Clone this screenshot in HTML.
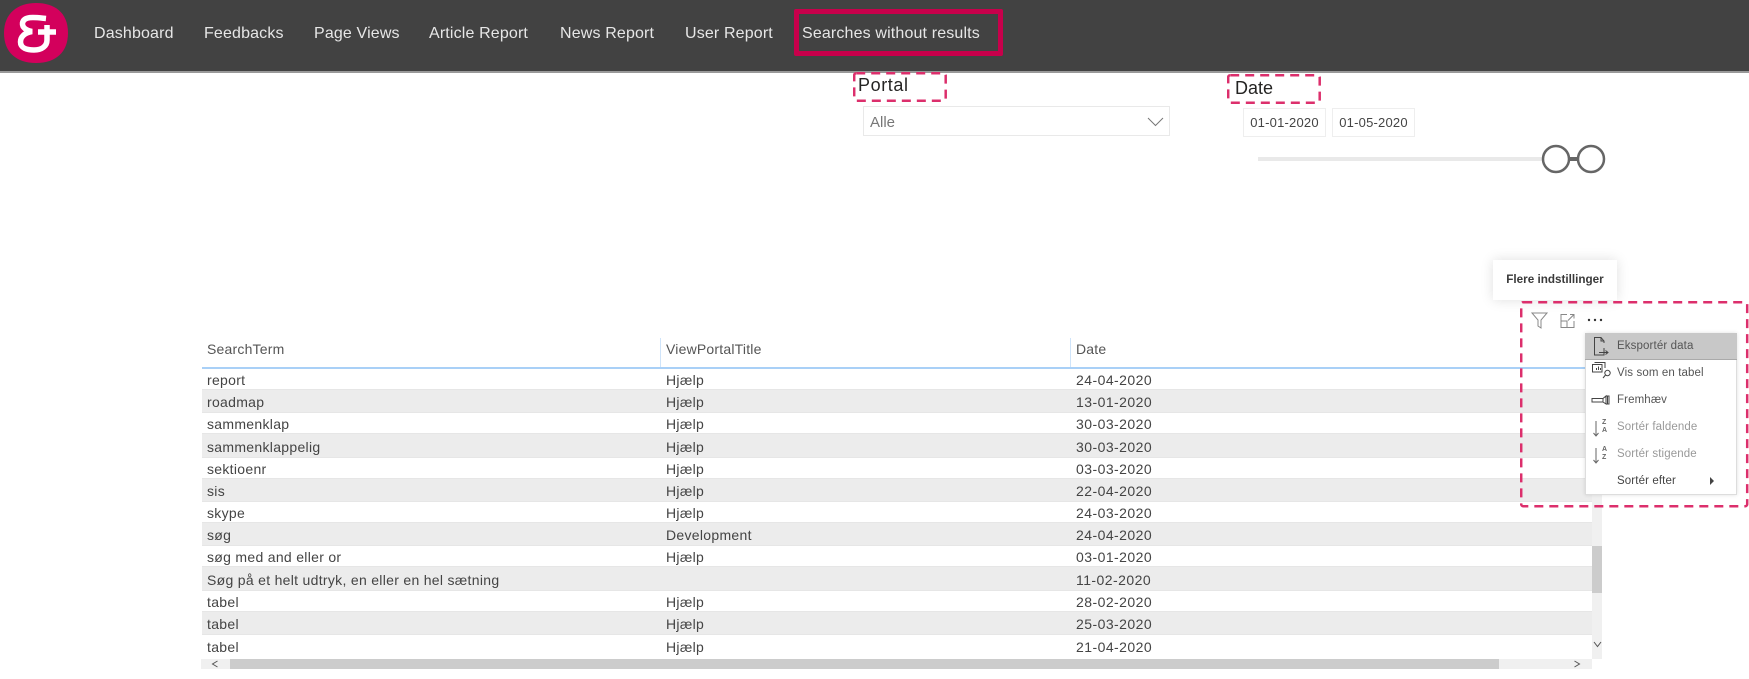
<!DOCTYPE html>
<html lang="da"><head><meta charset="utf-8"><title>Searches without results</title>
<style>
html,body{margin:0;padding:0;background:#fff;width:1749px;height:679px;overflow:hidden}
body{position:relative;font-family:"Liberation Sans",sans-serif;color:#444}
.a{position:absolute}
.hd{position:absolute;left:0;top:0;width:1749px;height:71px;background:#424242;border-bottom:2px solid #999}
.n{position:absolute;top:24px;font-size:16px;line-height:20px;color:#e6e6e6;white-space:nowrap;letter-spacing:.15px}
.row{position:absolute;left:202px;width:1390px;font-size:14px;color:#444;box-sizing:border-box;border-bottom:1px solid #e6e6e6}
.row.g{background:#ececec}
.row span{position:absolute;white-space:nowrap;top:50%;line-height:18px;margin-top:-8px;letter-spacing:.3px}
.c1{left:5px}.c2{left:464px}.row span.c3{left:874px;letter-spacing:.45px}
.th{position:absolute;top:340px;font-size:14px;line-height:18px;color:#555;white-space:nowrap;letter-spacing:.2px}
.mi{position:absolute;left:1617px;font-size:11.5px;line-height:14px;white-space:nowrap;letter-spacing:.12px;color:#555}
.dis{color:#999}
.date{position:absolute;top:108px;width:83px;height:29px;box-sizing:border-box;border:1px solid #eee;font-size:13px;line-height:27px;text-align:center;color:#444;letter-spacing:.2px}
</style></head><body>
<div class="hd"></div>
<svg class="a" style="left:0;top:0" width="80" height="72" viewBox="0 0 80 72">
<path d="M36 3C54 3 68 12 68 33C68 52 56 63 36 63C16 63 4 52 4 33C4 13 18 3 36 3Z" fill="#d3005c"/>
<path d="M46 18.500C36 17.500 24 15.500 22.500 23C22 28 27 30.500 32 31.500C24 33 20.500 37 20.500 42C20.500 48 27 50 34 50C42 50 47 46 47 40L47 25M38 32L56 32" fill="none" stroke="#fff" stroke-width="5.500"/>
</svg>
<div class="n" style="left:94px">Dashboard</div>
<div class="n" style="left:204px">Feedbacks</div>
<div class="n" style="left:314px">Page Views</div>
<div class="n" style="left:429px">Article Report</div>
<div class="n" style="left:560px">News Report</div>
<div class="n" style="left:685px">User Report</div>
<div class="n" style="left:802px">Searches without results</div>
<div class="a" style="left:794px;top:9px;width:209px;height:47px;box-sizing:border-box;border:5px solid #c8004b;border-radius:2px"></div>

<div class="a" style="left:858px;top:74px;font-size:18px;line-height:22px;color:#252423;letter-spacing:.6px">Portal</div>
<svg class="a" style="left:853px;top:72px" width="94" height="30"><rect x="1.200" y="1.200" width="91.500" height="27.500" rx="2" fill="none" stroke="#dc2f6c" stroke-width="2.500" stroke-dasharray="9 6"/></svg>
<div class="a" style="left:863px;top:106px;width:307px;height:30px;box-sizing:border-box;border:1px solid #e9e9e9"></div>
<div class="a" style="left:870px;top:114px;font-size:15px;line-height:18px;color:#777">Alle</div>
<svg class="a" style="left:1147px;top:116px" width="17" height="12"><path d="M1 2L8.500 9.500L16 2" fill="none" stroke="#777" stroke-width="1"/></svg>

<div class="a" style="left:1235px;top:77px;font-size:18px;line-height:22px;color:#252423">Date</div>
<svg class="a" style="left:1227px;top:74px" width="94" height="30"><rect x="1.200" y="1.200" width="91.500" height="27.500" rx="2" fill="none" stroke="#dc2f6c" stroke-width="2.500" stroke-dasharray="9 6"/></svg>
<div class="date" style="left:1243px">01-01-2020</div>
<div class="date" style="left:1332px">01-05-2020</div>
<div class="a" style="left:1258px;top:157px;width:290px;height:4px;background:#e9e9e9"></div>
<svg class="a" style="left:1540px;top:143px" width="68" height="32">
<path d="M28 16H38" stroke="#666" stroke-width="4"/>
<circle cx="16" cy="16" r="13" fill="#fff" stroke="#666" stroke-width="2.500"/>
<circle cx="51" cy="16" r="13" fill="#fff" stroke="#666" stroke-width="2.500"/>
</svg>

<div class="th" style="left:207px">SearchTerm</div>
<div class="th" style="left:666px">ViewPortalTitle</div>
<div class="th" style="left:1076px">Date</div>
<div class="a" style="left:660px;top:338px;width:1px;height:30px;background:#cfe4fa"></div>
<div class="a" style="left:1070px;top:338px;width:1px;height:30px;background:#cfe4fa"></div>
<div class="a" style="left:202px;top:367px;width:1390px;height:2px;background:#a9d0f7"></div>

<div class="row" style="top:369px;height:21px"><span class="c1">report</span><span class="c2">Hjælp</span><span class="c3">24-04-2020</span></div>
<div class="row g" style="top:390px;height:23px"><span class="c1">roadmap</span><span class="c2">Hjælp</span><span class="c3">13-01-2020</span></div>
<div class="row" style="top:413px;height:21px"><span class="c1">sammenklap</span><span class="c2">Hjælp</span><span class="c3">30-03-2020</span></div>
<div class="row g" style="top:434px;height:24px"><span class="c1">sammenklappelig</span><span class="c2">Hjælp</span><span class="c3">30-03-2020</span></div>
<div class="row" style="top:458px;height:21px"><span class="c1">sektioenr</span><span class="c2">Hjælp</span><span class="c3">03-03-2020</span></div>
<div class="row g" style="top:479px;height:23px"><span class="c1">sis</span><span class="c2">Hjælp</span><span class="c3">22-04-2020</span></div>
<div class="row" style="top:502px;height:21px"><span class="c1">skype</span><span class="c2">Hjælp</span><span class="c3">24-03-2020</span></div>
<div class="row g" style="top:523px;height:23px"><span class="c1">søg</span><span class="c2">Development</span><span class="c3">24-04-2020</span></div>
<div class="row" style="top:546px;height:21px"><span class="c1">søg med and eller or</span><span class="c2">Hjælp</span><span class="c3">03-01-2020</span></div>
<div class="row g" style="top:567px;height:24px"><span class="c1">Søg på et helt udtryk, en eller en hel sætning</span><span class="c3">11-02-2020</span></div>
<div class="row" style="top:591px;height:21px"><span class="c1">tabel</span><span class="c2">Hjælp</span><span class="c3">28-02-2020</span></div>
<div class="row g" style="top:612px;height:23px"><span class="c1">tabel</span><span class="c2">Hjælp</span><span class="c3">25-03-2020</span></div>
<div class="row" style="top:635px;height:21px;border:0"><span class="c1">tabel</span><span class="c2">Hjælp</span><span class="c3">21-04-2020</span></div>

<div class="a" style="left:1592px;top:369px;width:10px;height:290px;background:#f0f0f0"></div>
<div class="a" style="left:1592px;top:546px;width:10px;height:47px;background:#ccc"></div>
<svg class="a" style="left:1593px;top:641px" width="9" height="7"><path d="M1 1L4.500 5.500L8 1" fill="none" stroke="#555" stroke-width="1"/></svg>
<div class="a" style="left:201px;top:659px;width:1391px;height:10px;background:#f0f0f0"></div>
<div class="a" style="left:230px;top:659px;width:1269px;height:10px;background:#ccc"></div>
<svg class="a" style="left:211px;top:660px" width="8" height="8"><path d="M6.500 1L1.500 4L6.500 7" fill="none" stroke="#555" stroke-width="1"/></svg>
<svg class="a" style="left:1573px;top:660px" width="8" height="8"><path d="M1.500 1L6.500 4L1.500 7" fill="none" stroke="#555" stroke-width="1"/></svg>

<div class="a" style="left:1493px;top:260px;width:124px;height:40px;background:#fff;box-shadow:0 0 12px rgba(0,0,0,.13);font-weight:bold;font-size:11.7px;line-height:40px;text-align:center;color:#3a3a3a;white-space:nowrap">Flere indstillinger</div>

<svg class="a" style="left:1520px;top:301px" width="229" height="207"><rect x="1.200" y="1.200" width="226" height="204" rx="2" fill="none" stroke="#dc2f6c" stroke-width="2.500" stroke-dasharray="9 6"/></svg>

<svg class="a" style="left:1530px;top:310px" width="75" height="20" fill="none">
<path d="M2 3H17L11 10V18L8 16V10Z" stroke="#888" stroke-width="1"/>
<path d="M37 4.500H31V17.500H44V11M31 11H37V17.500M38 10.500L44 4.500M40 4.500H44V8.500" stroke="#888" stroke-width="1"/>
<circle cx="59" cy="10" r="1.200" fill="#333"/><circle cx="65" cy="10" r="1.200" fill="#333"/><circle cx="71" cy="10" r="1.200" fill="#333"/>
</svg>

<div class="a" style="left:1585px;top:333px;width:152px;height:162px;box-sizing:border-box;background:#fff;border:1px solid #ddd;box-shadow:0 0 4px rgba(0,0,0,.12)"></div>
<div class="a" style="left:1585px;top:333px;width:152px;height:27px;background:#c8c8c8;border-bottom:1px solid #aaa;box-sizing:border-box"></div>
<svg class="a" style="left:1590px;top:335px" width="26" height="160" fill="none" stroke="#444" stroke-width="1">
<path d="M14 13V20H4.500V2.500H11L14 6V8M11 2.500V6H14M9 17.500H18M15.500 15.500L18 17.500L15.500 19.500"/>
<path d="M2.500 29.500H12V37H2.500ZM4.500 27.500H15V33M6.500 35V33M8.500 35V31.500M10.500 35V33M13 43L15.500 40"/><circle cx="17.500" cy="38" r="2.700" fill="#fff"/>
<path d="M2 63.500H13V67H2ZM13 63.500L16 61V69L13 67M16 61H19V69H16M17.500 61V69"/>
<path d="M6 86V101M3.500 98L6 101L8.500 98M6 113V128M3.500 125L6 128L8.500 125" stroke="#666"/>
</svg>
<div class="a" style="left:1602px;top:419px;font-size:7px;line-height:8px;color:#666;font-weight:bold">Z<br>A</div>
<div class="a" style="left:1602px;top:446px;font-size:7px;line-height:8px;color:#666;font-weight:bold">A<br>Z</div>
<div class="mi" style="top:339px">Eksportér data</div>
<div class="mi" style="top:366px">Vis som en tabel</div>
<div class="mi" style="top:393px">Fremhæv</div>
<div class="mi dis" style="top:420px">Sortér faldende</div>
<div class="mi dis" style="top:447px">Sortér stigende</div>
<div class="mi" style="top:474px;color:#444">Sortér efter</div>
<svg class="a" style="left:1709px;top:477px" width="6" height="8"><path d="M1 0L5 4L1 8Z" fill="#444"/></svg>
</body></html>
